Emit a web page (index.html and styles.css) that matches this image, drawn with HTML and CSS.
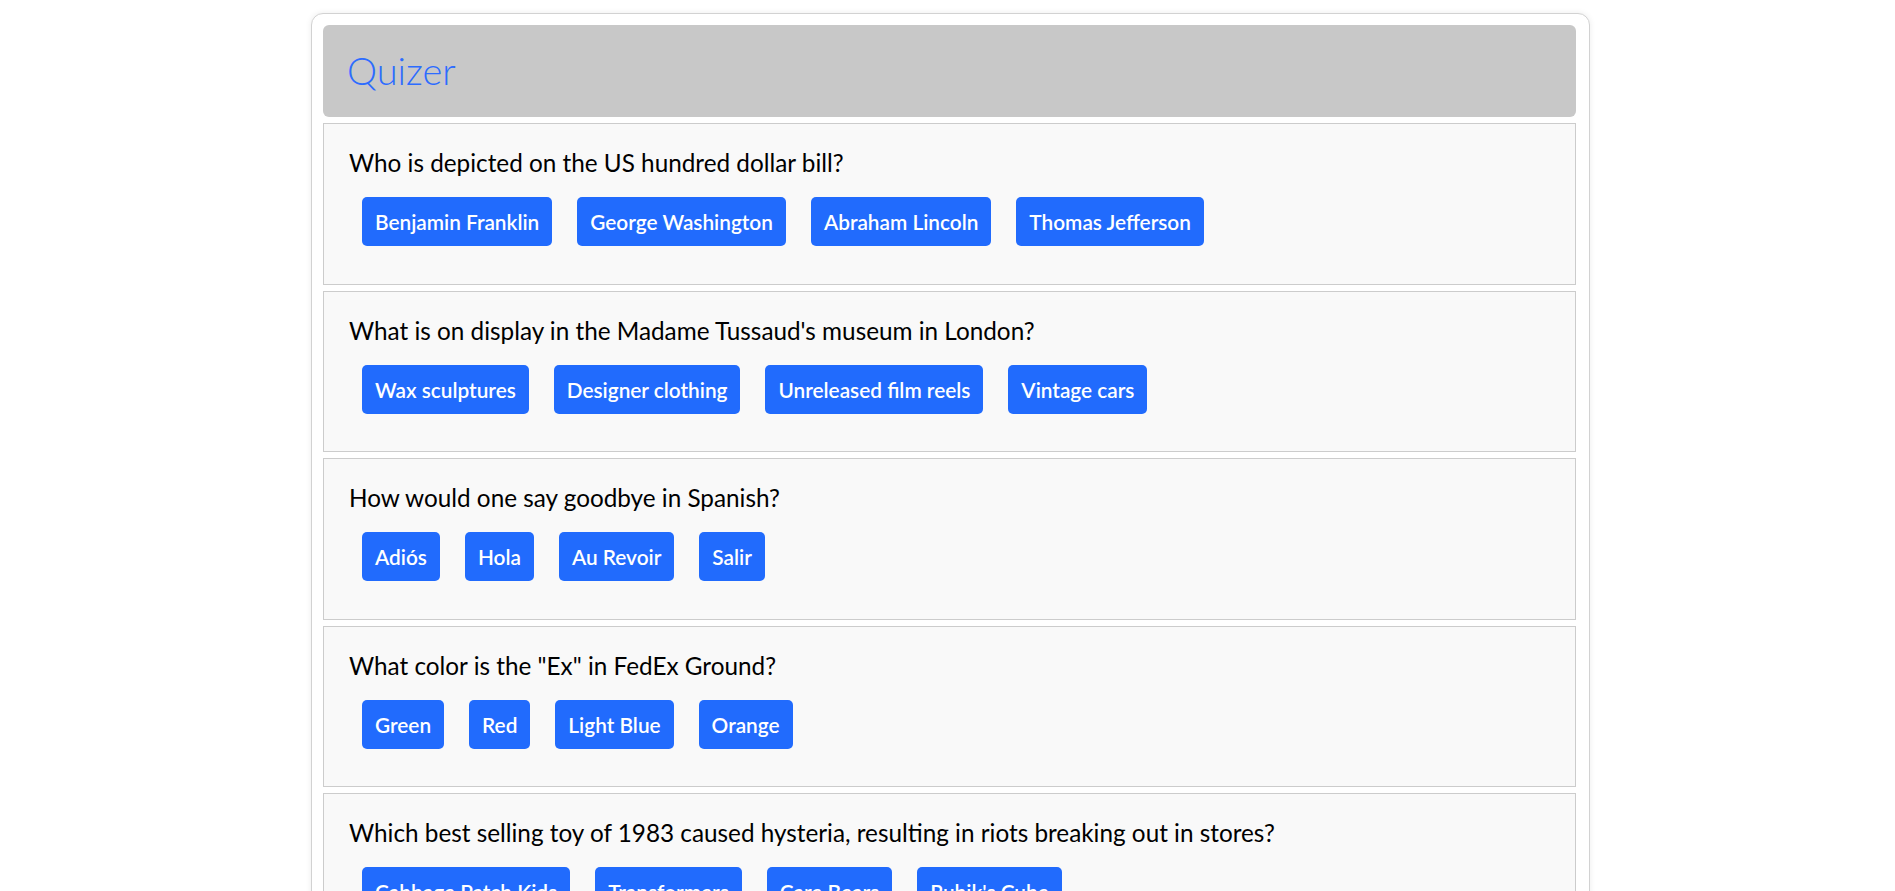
FILE: index.html
```html
<!DOCTYPE html>
<html lang="en">
<head>
<meta charset="utf-8">
<title>Quizer</title>
<link rel="stylesheet" href="styles.css">
</head>
<body>
<div class="app">
  <header class="header"><h1 class="title">Quizer</h1></header>

  <section class="card">
    <p class="question">Who is depicted on the US hundred dollar bill?</p>
    <div class="options">
      <button class="btn">Benjamin Franklin</button>
      <button class="btn">George Washington</button>
      <button class="btn">Abraham Lincoln</button>
      <button class="btn">Thomas Jefferson</button>
    </div>
  </section>

  <section class="card">
    <p class="question">What is on display in the Madame Tussaud's museum in London?</p>
    <div class="options">
      <button class="btn">Wax sculptures</button>
      <button class="btn">Designer clothing</button>
      <button class="btn">Unreleased film reels</button>
      <button class="btn">Vintage cars</button>
    </div>
  </section>

  <section class="card">
    <p class="question">How would one say goodbye in Spanish?</p>
    <div class="options">
      <button class="btn">Adiós</button>
      <button class="btn">Hola</button>
      <button class="btn">Au Revoir</button>
      <button class="btn">Salir</button>
    </div>
  </section>

  <section class="card">
    <p class="question">What color is the "Ex" in FedEx Ground?</p>
    <div class="options">
      <button class="btn">Green</button>
      <button class="btn">Red</button>
      <button class="btn">Light Blue</button>
      <button class="btn">Orange</button>
    </div>
  </section>

  <section class="card">
    <p class="question">Which best selling toy of 1983 caused hysteria, resulting in riots breaking out in stores?</p>
    <div class="options">
      <button class="btn">Cabbage Patch Kids</button>
      <button class="btn">Transformers</button>
      <button class="btn">Care Bears</button>
      <button class="btn">Rubik's Cube</button>
    </div>
  </section>
</div>
</body>
</html>
```

FILE: styles.css
```css
* { box-sizing: border-box; }

html, body {
  margin: 0;
  background: #ffffff;
}

body {
  padding: 13px 0 0 6px;
  font-family: "Lato", "Open Sans", sans-serif;
  color: #000;
}

.app {
  width: 1279px;
  margin: 0 auto;
  border: 1px solid #d2d2d2;
  border-radius: 12px;
  padding: 11px 13px 11px 11px;
  background: #fff;
  box-shadow: 0 0 6px rgba(0, 0, 0, 0.08);
}

.header {
  background: #c8c8c8;
  border-radius: 6px;
  padding: 22px 24px 24px;
}

.title {
  margin: 0;
  font-size: 38px;
  line-height: 46px;
  font-weight: 300;
  color: #2d6cff;
}

.card {
  margin-top: 6px;
  border: 1px solid #cccccc;
  background: #f9f9f9;
  padding: 24px 25px 37.5px;
}

.question {
  margin: 0;
  font-size: 24.3px;
  line-height: 29px;
  font-weight: 400;
}

.options {
  display: flex;
  gap: 25px;
  margin-top: 20px;
  padding-left: 13px;
}

.btn {
  height: 49px;
  padding: 0 13px;
  border: none;
  border-radius: 5px;
  background: #216bfd;
  color: #ffffff;
  font-family: "Lato", "Open Sans", sans-serif;
  font-size: 20.8px;
  font-weight: 600;
  cursor: pointer;
}
```
